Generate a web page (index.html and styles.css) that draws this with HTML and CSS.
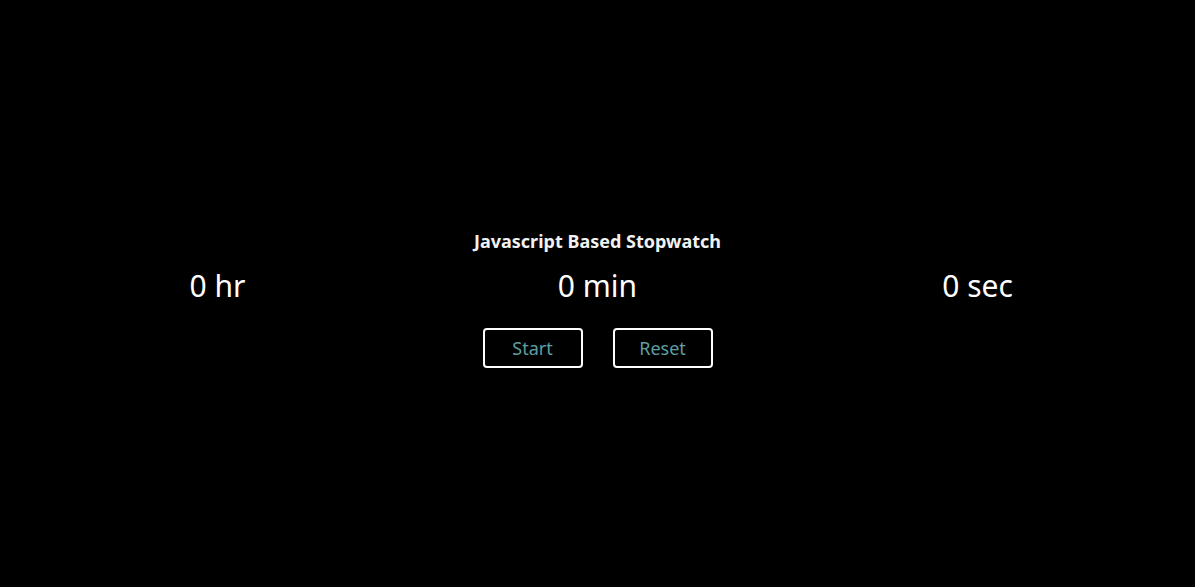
FILE: index.html
```html
<!DOCTYPE html>
<html lang="en">
<head>
<meta charset="utf-8">
<title>Javascript Based Stopwatch</title>
<link rel="stylesheet" href="styles.css">
</head>
<body>
<main class="stopwatch">
  <h1 class="title">Javascript Based Stopwatch</h1>
  <div class="time-row">
    <div class="unit">0 hr</div>
    <div class="unit">0 min</div>
    <div class="unit">0 sec</div>
  </div>
  <div class="controls">
    <button class="btn" type="button">Start</button>
    <button class="btn" type="button">Reset</button>
  </div>
</main>
</body>
</html>
```

FILE: styles.css
```css
html, body {
  margin: 0;
  padding: 0;
  background: #000;
  height: 100%;
}
body {
  font-family: "Noto Sans", "Open Sans", sans-serif;
  color: #fff;
}
.stopwatch {
  display: flex;
  flex-direction: column;
  align-items: center;
  padding-top: 228px;
}
.title {
  margin: 0;
  font-size: 18px;
  font-weight: 700;
  line-height: 26px;
  color: #f2f2f2;
}
.time-row {
  display: grid;
  grid-template-columns: repeat(3, 380px);
  width: 1140px;
  margin-top: 10px;
}
.unit {
  text-align: center;
  font-size: 30px;
  line-height: 44px;
}
.controls {
  display: flex;
  gap: 30px;
  margin-top: 20px;
}
.btn {
  box-sizing: border-box;
  width: 100px;
  height: 40px;
  background: #000;
  border: 2px solid #fff;
  border-radius: 4px;
  color: #5f9ea0;
  font-family: inherit;
  font-size: 18px;
  padding: 0;
}
```
